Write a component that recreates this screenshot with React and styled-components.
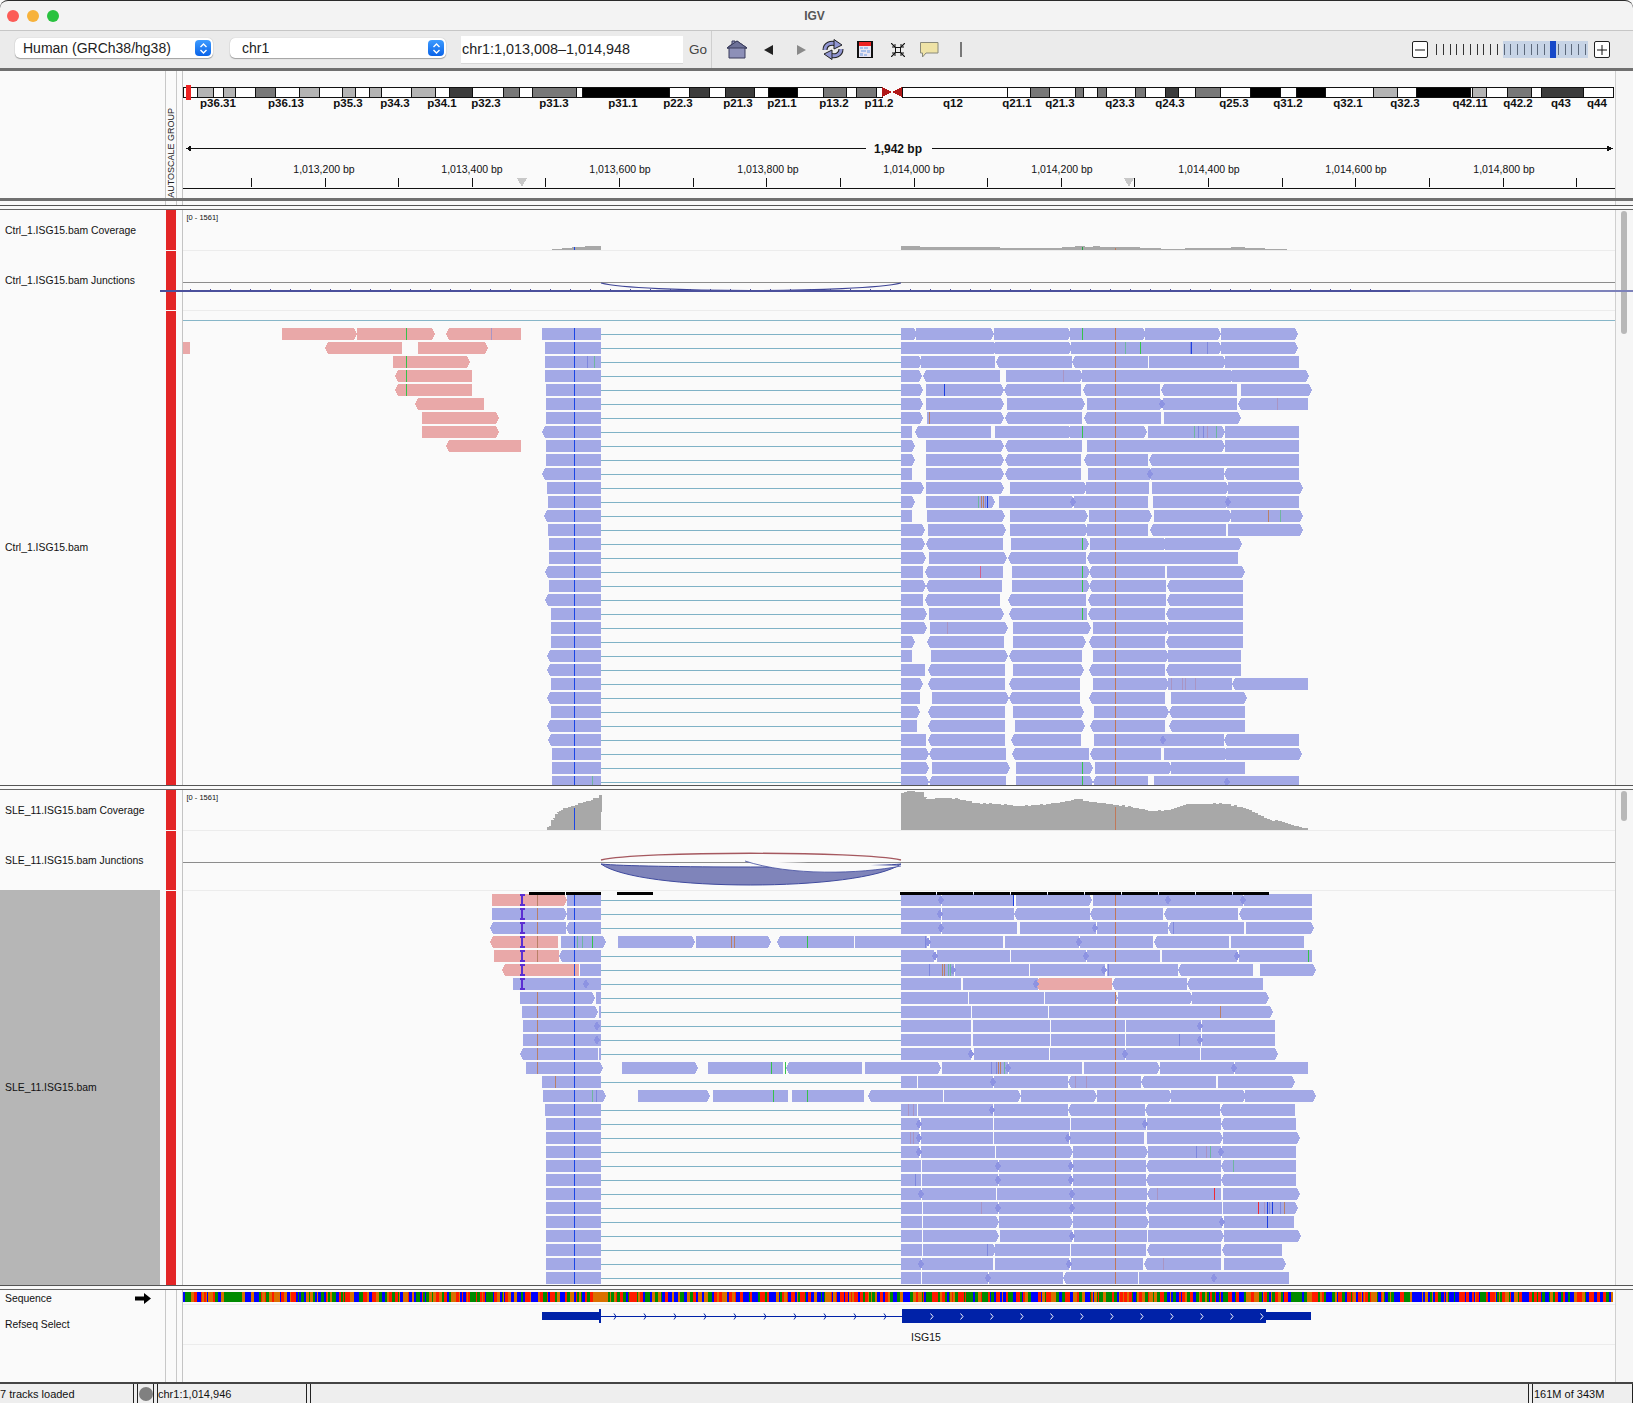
import React from "react";
import styled, { createGlobalStyle } from "styled-components";

const GlobalStyle = createGlobalStyle`
  html, body {
    margin: 0;
    padding: 0;
    background: #ffffff;
    overflow: hidden;
    font-family: "Liberation Sans", Arial, sans-serif;
  }
`;

// reads: "a-b>" = read from a to b, "<" / ">" = arrow end, trailing p = pink read,
// "*x" = overlap diamond, letter + x = mismatch tick
const MARKS = {
  g: "#35c24a",
  t: "#6fb5a0",
  b: "#1c3fe0",
  l: "#7f88dd",
  o: "#b98068",
  u: "#a995c4",
  r: "#ee2a35",
  m: "#d0608a",
};

const PANEL_ONE = [
  "542-601 282-357>p 357-435>p <446-521p g406 u491 901-917> 916-994> 994-1071> 1070-1146> 1145-1221> 1221-1298> g1082",
  "545-601 183-190p <325-402p 418-488>p 901-921 921-997> 995-1072> 1071-1146 1145-1222> 1221-1298> t1125 g1140 l1190 b1191 l1207",
  "545-601 393-470>p g406 l587 t594 901-922> 921-995 <996-1072 <1072-1148 1149-1226> 1225-1299",
  "545-601 <395-472p g406 901-922> <923-1000 1006-1083> 1082-1158 1157-1234> 1232-1309> u1063",
  "546-601 <395-472p g406 901-923> 926-1004> <1004-1081 <1083-1160 <1161-1237 1241-1312> b944",
  "546-601 <415-484p 901-923> 926-1004> 1007-1085> 1087-1163> 1163-1237 <1238-1308 *1162 u1277",
  "546-601 422-499>p 901-923> 927-1004> <1005-1082 <1084-1161 1164-1241> o929",
  "<542-601 422-499>p 901-912 <915-991 995-1072> 1070-1147> 1148-1225> 1225-1299 g1082 t1194 l1198 l1203 u1207 t1216",
  "546-601 <446-521p 901-915> 926-1004> <1005-1082 1087-1152> 1149-1225> 1225-1299",
  "546-601 901-915> 926-1004> <1005-1081 <1084-1148 <1149-1225 1225-1299",
  "<542-601 901-912 926-1004> <1005-1081 1088-1153> 1151-1224 <1224-1299 *1150",
  "547-601 901-924> 926-1004> 1010-1087> 1086-1149 1152-1229> 1228-1303>",
  "548-601 901-915> 926-995> 999-1075> 1074-1148 1153-1229> 1227-1299 *1073 *1228 t978 o981 o983 l985 b987",
  "<544-601 901-912 927-1005> 1010-1088> 1089-1152> 1154-1232> 1231-1303> o1268 t1280",
  "548-601 901-925> 928-1006> 1010-1088> 1087-1148 <1150-1226 1228-1303>",
  "549-601 901-925> <926-1003 1011-1089> 1090-1167> 1165-1242> g1082",
  "549-601 901-926> 929-1007> <1008-1086 <1087-1165 <1162-1238",
  "<545-601 901-923 <925-1003 1012-1090> <1089-1165 1167-1245> m980 g1082",
  "549-601 901-926> <926-1002 1012-1090> <1089-1166 <1167-1243 g1082",
  "<545-601 901-923 <925-1000 <1008-1086 <1088-1166 <1167-1243",
  "551-601 901-927> 929-1004> <1009-1087 <1088-1165 <1166-1243 g1082",
  "551-601 901-927> 930-1008> 1013-1091> 1093-1169> 1168-1243 u947",
  "551-601 901-915> <927-1004 1013-1086> <1089-1165 <1166-1243",
  "<547-601 901-912 931-1008> <1009-1082 1093-1169> 1168-1241",
  "<547-601 901-925 <928-1005 1013-1084> <1089-1165 <1166-1241",
  "551-601 901-923> <928-1005 <1009-1080 1093-1169> 1168-1232 <1232-1308 u1171 u1182 u1185 u1195",
  "<547-601 901-920 932-1009> <1009-1080 <1089-1165 1171-1247>",
  "551-601 901-920> <928-1005 1013-1084> 1094-1169> <1169-1245",
  "<547-601 901-917 <928-1005 1015-1085> <1090-1165 <1169-1245",
  "<548-601 901-926 <928-1005 <1011-1081 1094-1165 1163-1224 <1224-1299 *1163",
  "552-601 901-929> <929-1006 <1012-1089 <1090-1161 1164-1228> 1226-1302>",
  "552-601 901-929> 932-1010> 1016-1093> 1095-1172> 1171-1245 g1082",
  "552-601 901-929> <929-1006 1016-1093> <1093-1148 1154-1229 1227-1299 g1082 t592 *1227",
];

const PANEL_TWO = [
  "492-567>p 567-601 o537 901-941 *941 942-1013 1016-1092> 1093-1169 *1168 1169-1243 *1243 1244-1312 b1013",
  "492-567> 567-601 o537 901-941 *940 942-1014 <1014-1090 <1090-1163 <1164-1238 <1239-1312",
  "<490-566 <566-601 o537 901-941 *941 942-1017 1020-1096 *1095 1097-1168 <1168-1244 1246-1314> l1173",
  "<490-558p 561-606> o537 618-695> 696-771> <777-854 855-927 *928 930-1003 1005-1079 *1079 1080-1153 <1154-1229 1231-1304 t577 t582 g592 o731 o734 g807 l925",
  "494-559p <559-601 o537 901-934 *935 937-1010 1011-1086 *1086 1087-1160 1162-1237 *1237 1239-1312 g1308",
  "<502-579p 580-601 901-954 *953 955-1029 1030-1105 *1104 1107-1178 <1178-1253 1260-1316> l929 o942 o944 t948 t950 l1108",
  "513-601 *586 901-961 963-1038 <1036-1112p *1036 <1112-1187 <1187-1263",
  "520-595> 596-601 o537 901-968 969-1044 1045-1118> 1118-1193> 1192-1269>",
  "522-598> 599-601 o537 901-971 972-1048 1049-1122 1122-1197 1197-1273> o1220",
  "523-601 *597 o537 901-971 973-1050 1051-1125 1126-1201 *1200 1202-1275",
  "523-601 *597 o537 901-971 973-1050 1051-1125 1126-1201 *1200 1202-1275 l1179",
  "<520-598 599-601 o537 901-971 *971 974-1049 1050-1125 *1125 1126-1200 1201-1278>",
  "526-603> o537 622-698> 708-783 <786-862 865-941> 942-1008 *1008 1009-1082 1084-1160> 1160-1234 *1234 1235-1308 g771 g785 l991 l996 o998 o1000 t1004",
  "542-601 o555 901-917 918-993 *993 994-1068 <1068-1141 <1141-1216 1218-1295> u1075 u1086",
  "543-606> 638-710> 713-788 792-864 <868-943 944-1021> 1021-1097> 1097-1172> 1171-1246> 1245-1316> t592 l596 g773 g807",
  "545-601 901-917 918-993 *992 994-1068 <1068-1145 <1145-1220 <1220-1295 u908 u913",
  "546-601 901-919 *919 921-993 994-1070 1071-1146 *1145 1147-1221 <1221-1296",
  "546-601 901-919 *919 921-993 994-1069 *1068 1070-1144 1147-1223> 1223-1300> u910 u913",
  "546-601 901-919 *919 921-995 996-1073> 1073-1148> 1148-1221 *1221 1222-1296 l1196 u1206 t1210",
  "546-601 901-921 922-998 *998 999-1071 *1071 1073-1146 <1146-1221 <1221-1296 t1233",
  "546-601 901-921 922-998 *998 999-1071 *1071 1073-1146 <1146-1221 <1221-1296 l915",
  "546-601 901-921 *921 922-996 997-1072 *1072 1073-1147 <1147-1221 1223-1300> u1157 r1214",
  "546-601 901-922 923-998 *998 999-1072 *1072 1073-1146 <1146-1222 1223-1298> u981 r1258 u1264 b1267 l1269 b1272 l1280 o1284",
  "546-601 901-922 923-999> 999-1073> 1073-1149> 1149-1222 *1222 1224-1294 b1267",
  "546-601 901-922 923-999> 1000-1072 *1072 1074-1147 1148-1224> 1224-1301>",
  "546-601 901-922 923-996> 995-1070 1071-1146 <1147-1221 <1222-1282 l987",
  "546-601 901-921 *921 922-993 995-1069 *1069 1071-1143 <1144-1221 1224-1286> u1163",
  "546-601 901-921 922-988 *988 989-1063 <1063-1138 1139-1215 *1214 1215-1289",
];

const BANDS = [
  [183, 197, "#fff"], [197, 213, "#b4b4b4"], [213, 223, "#fff"], [223, 235, "#b4b4b4"], [235, 255, "#fff"],
  [255, 275, "#787878"], [275, 299, "#fff"], [299, 319, "#b4b4b4"], [319, 342, "#fff"], [342, 355, "#b4b4b4"],
  [355, 369, "#fff"], [369, 381, "#b4b4b4"], [381, 411, "#fff"], [411, 435, "#b4b4b4"], [435, 449, "#fff"],
  [449, 472, "#3c3c3c"], [472, 503, "#fff"], [503, 519, "#787878"], [519, 532, "#fff"], [532, 576, "#787878"],
  [576, 582, "#fff"], [582, 669, "#000"], [669, 689, "#fff"], [689, 709, "#3c3c3c"], [709, 725, "#fff"],
  [725, 754, "#3c3c3c"], [754, 768, "#fff"], [768, 797, "#000"], [797, 823, "#fff"], [823, 846, "#787878"],
  [846, 856, "#fff"], [856, 876, "#787878"], [876, 882, "#fff"], [902, 1007, "#fff"], [1007, 1030, "#fff"],
  [1030, 1049, "#787878"], [1049, 1075, "#fff"], [1075, 1083, "#787878"], [1083, 1097, "#fff"], [1097, 1106, "#787878"],
  [1106, 1135, "#fff"], [1135, 1145, "#787878"], [1145, 1165, "#fff"], [1165, 1178, "#3c3c3c"], [1178, 1195, "#fff"],
  [1195, 1220, "#787878"], [1220, 1250, "#fff"], [1250, 1280, "#000"], [1280, 1296, "#fff"], [1296, 1325, "#000"],
  [1325, 1373, "#fff"], [1373, 1397, "#b4b4b4"], [1397, 1416, "#fff"], [1416, 1470, "#000"], [1470, 1472, "#fff"],
  [1472, 1486, "#b4b4b4"], [1486, 1507, "#fff"], [1507, 1531, "#787878"], [1531, 1541, "#fff"], [1541, 1583, "#3c3c3c"],
  [1583, 1613, "#fff"],
];

const BAND_LABELS = [
  ["p36.31", 218], ["p36.13", 286], ["p35.3", 348], ["p34.3", 395], ["p34.1", 442], ["p32.3", 486], ["p31.3", 554],
  ["p31.1", 623], ["p22.3", 678], ["p21.3", 738], ["p21.1", 782], ["p13.2", 834], ["p11.2", 879], ["q12", 953],
  ["q21.1", 1017], ["q21.3", 1060], ["q23.3", 1120], ["q24.3", 1170], ["q25.3", 1234], ["q31.2", 1288], ["q32.1", 1348],
  ["q32.3", 1405], ["q42.11", 1470], ["q42.2", 1518], ["q43", 1561], ["q44", 1597],
];

const RULER_LABELS = [
  ["1,013,200 bp", 324], ["1,013,400 bp", 472], ["1,013,600 bp", 620], ["1,013,800 bp", 768], ["1,014,000 bp", 914],
  ["1,014,200 bp", 1062], ["1,014,400 bp", 1209], ["1,014,600 bp", 1356], ["1,014,800 bp", 1504],
];

const COVERAGE_TWO = [
  [[544, 830], [548, 826], [552, 818], [556, 812], [560, 810], [565, 808], [572, 806], [580, 803], [590, 800], [601, 795]],
  [[901, 793], [909, 791], [921, 792], [926, 799], [940, 798], [957, 799], [974, 803], [995, 804], [1019, 806], [1048, 804],
    [1062, 802], [1077, 799], [1091, 802], [1110, 804], [1130, 807], [1149, 811], [1168, 810], [1187, 804], [1207, 804],
    [1219, 803], [1240, 807], [1255, 813], [1269, 820], [1279, 821], [1293, 826], [1308, 829]],
];

const COVERAGE_ONE = [
  "552,250 552,249 562,249 562,248 572,248 572,247 585,247 585,246 601,246 601,250",
  "901,250 901,246 920,246 920,247 1000,247 1000,248 1062,248 1062,247 1075,247 1075,246 1085,246 1085,247 1093,247 1093,246 1100,246 1100,247 1140,247 1140,248 1161,248 1161,249 1185,249 1185,248 1231,248 1231,247 1245,247 1245,248 1265,248 1265,249 1287,249 1287,250",
];

const stepCoverage = (pts) => {
  const out = [`${pts[0][0]},830`];
  for (let i = 0; i < pts.length - 1; i++) {
    const [x0, y0] = pts[i];
    const [x1, y1] = pts[i + 1];
    for (let x = x0; x < x1; x += 3) {
      const wobble = Math.sin(x * 0.9) * 0.45;
      const y = Math.round(y0 + ((y1 - y0) * (x - x0)) / (x1 - x0) + wobble);
      out.push(`${x},${y}`, `${x + 3},${y}`);
    }
  }
  out.push(`${pts[pts.length - 1][0]},830`);
  return out.join(" ");
};

const SEQ_COLORS = ["#008a00", "#0000ff", "#d97000", "#ff1a00"];
const makeSequence = () => {
  let seed = 11;
  const bars = [];
  let x = 183;
  while (x < 1613) {
    seed = (seed * 1103515245 + 12345) & 0x7fffffff;
    const w = Math.min(1 + ((seed >> 8) % 3), 1613 - x);
    const c = x > 222 && x < 240 ? 0 : (seed >> 16) % 4;
    bars.push([x, w, SEQ_COLORS[c]]);
    x += w;
  }
  return bars;
};
const SEQUENCE = makeSequence();

const Window = styled.div`
  width: 1633px;
  height: 1403px;
  display: flex;
  flex-direction: column;
  background: #fafafa;
  overflow: hidden;
`;

const TitleBar = styled.div`
  height: 31px;
  box-sizing: border-box;
  flex: none;
  display: flex;
  align-items: center;
  position: relative;
  padding-left: 7px;
  gap: 8px;
  background: #f3f3f3;
  border-top: 1px solid #2a2a2a;
  border-bottom: 1px solid #c6c6c6;
  border-radius: 8px 8px 0 0;
`;

const Light = styled.span`
  width: 12px;
  height: 12px;
  border-radius: 50%;
  background: ${(p) => p.$color};
`;

const WindowTitle = styled.div`
  position: absolute;
  left: 0;
  right: 4px;
  text-align: center;
  font-size: 12px;
  font-weight: bold;
  color: #555;
`;

const Toolbar = styled.div`
  height: 40px;
  box-sizing: border-box;
  flex: none;
  display: flex;
  align-items: center;
  padding-left: 15px;
  background: #ebebeb;
  border-bottom: 3px solid #707070;
`;

const SelectBox = styled.div`
  width: ${(p) => p.$w}px;
  height: 20px;
  box-sizing: border-box;
  margin-left: ${(p) => p.$ml || 0}px;
  margin-top: -3px;
  padding: 0 2px 0 ${(p) => p.$pad}px;
  display: flex;
  align-items: center;
  justify-content: space-between;
  background: #fff;
  border-radius: 5px;
  box-shadow: 0 1px 1px rgba(0, 0, 0, 0.3), 0 0 1px rgba(0, 0, 0, 0.25);
  font-size: 14px;
  color: #222;
`;

const Stepper = styled.span`
  width: 16px;
  height: 16px;
  display: flex;
  align-items: center;
  justify-content: center;
  border-radius: 4px;
  background: linear-gradient(#3d9bff, #0a63e8);
`;

const LocusInput = styled.div`
  width: 222px;
  height: 28px;
  margin-left: 15px;
  box-sizing: border-box;
  padding-left: 1px;
  display: flex;
  align-items: center;
  background: #fff;
  border-bottom: 1px solid #d8d8d8;
  font-size: 14.4px;
  color: #222;
`;

const GoLabel = styled.span`
  width: 17px;
  margin-left: 6px;
  margin-right: 1px;
  font-size: 13.5px;
  color: #444;
`;

const ToolSeparator = styled.span`
  width: 1px;
  align-self: stretch;
  margin-left: 4px;
  background: #cfcfcf;
`;

const ToolIcon = styled.svg`
  flex: none;
  display: block;
  margin-left: ${(p) => p.$ml}px;
`;

const ZoomControl = styled.div`
  margin-left: auto;
  margin-right: 23px;
  display: flex;
  align-items: center;
`;

const ZoomButton = styled.span`
  width: 16px;
  height: 17px;
  box-sizing: border-box;
  display: flex;
  align-items: center;
  justify-content: center;
  background: #fff;
  border: 1px solid #222;
  border-radius: 2px;
`;

const ZoomTrack = styled.div`
  position: relative;
  width: 150px;
  height: 17px;
  margin: 0 8px;
  display: flex;
  align-items: center;
  justify-content: space-between;
`;

const ZoomTick = styled.span`
  width: 1px;
  height: 11px;
  background: #333;
`;

const ZoomRange = styled.span`
  position: absolute;
  left: 67px;
  top: 0;
  width: 85px;
  height: 17px;
  background: rgba(150, 180, 225, 0.42);
`;

const ZoomThumb = styled.span`
  position: absolute;
  left: 114px;
  top: 0;
  width: 6px;
  height: 17px;
  background: #1648c8;
`;

const HeaderPanel = styled.div`
  height: 130px;
  box-sizing: border-box;
  flex: none;
  display: grid;
  grid-template-columns: 165px 12px 5px 1fr 18px;
  background: #fafafa;
  border-bottom: 3px solid #707070;
`;

const AttrHeader = styled.div`
  display: flex;
  align-items: flex-end;
  justify-content: center;
  box-sizing: border-box;
  border-left: 1px solid #c8c8c8;
  border-right: 1px solid #c8c8c8;
`;

const AutoscaleLabel = styled.span`
  writing-mode: vertical-rl;
  transform: rotate(180deg);
  font-size: 9px;
  line-height: 10px;
  white-space: nowrap;
  color: #222;
`;

const Strip = styled.div`
  height: 4px;
  flex: none;
  display: grid;
  grid-template-columns: 165px 12px 5px 1fr 18px;
  background: #fafafa;
`;

const Divider = styled.div`
  height: 5px;
  flex: none;
  box-sizing: border-box;
  background: #fafafa;
  border-top: 1px solid #555;
  border-bottom: 1px solid #666;
`;

const TrackPanel = styled.div`
  height: ${(p) => p.$h}px;
  flex: none;
  position: relative;
  display: grid;
  grid-template-columns: 160px 6px 10px 6px 1fr 18px;
  overflow: hidden;
`;

const NameColumn = styled.div`
  display: flex;
  flex-direction: column;
`;

const NameCell = styled.div`
  height: ${(p) => (p.$h ? `${p.$h}px` : "auto")};
  flex: ${(p) => (p.$h ? "none" : 1)};
  display: flex;
  align-items: center;
  padding-left: 5px;
  font-size: 10.4px;
  color: #111;
  background: ${(p) => (p.$selected ? "#b6b6b6" : "transparent")};
`;

const SequenceArrow = styled.svg`
  margin-left: 83px;
`;

const AttrColumn = styled.div`
  grid-column: 3;
  display: flex;
  flex-direction: column;
  gap: 1px;
`;

const AttrBox = styled.div`
  height: ${(p) => (p.$h ? `${p.$h - 1}px` : "auto")};
  flex: ${(p) => (p.$h ? "none" : 1)};
  background: #e32526;
`;

const DataColumn = styled.div`
  grid-column: ${(p) => p.$col};
  border-left: 1px solid #c4c4c4;
  min-width: 0;
`;

const ScrollColumn = styled.div`
  grid-column: ${(p) => p.$col};
  box-sizing: border-box;
  padding: 1px 6px 0 5px;
  background: #f6f6f6;
  border-left: 1px solid #cfcfcf;
`;

const ScrollThumb = styled.div`
  height: ${(p) => p.$h}px;
  border-radius: 4px;
  background: #b8b8b8;
`;

const Canvas = styled.svg`
  display: block;
  width: 100%;
  height: 100%;
  shape-rendering: crispEdges;
`;

const SmoothGroup = styled.g`
  shape-rendering: auto;
`;

const JunctionLine = styled.div`
  position: absolute;
  left: 160px;
  right: 0;
  top: 80px;
  height: 2px;
  background: linear-gradient(to right, #4b509c 1250px, #7d82ba 1250px);
`;

const SmallText = styled.text`
  font-size: ${(p) => p.$size || 10.5}px;
  font-weight: ${(p) => (p.$bold ? "bold" : "normal")};
  fill: #111;
  text-anchor: ${(p) => p.$anchor || "middle"};
  shape-rendering: auto;
`;

const ReadBody = styled.polygon`
  fill: ${(p) => (p.$pink ? "#e9a8a8" : "#a3a9e6")};
`;

const BottomPanel = styled(TrackPanel)`
  grid-template-columns: 165px 12px 5px 1fr 18px;
`;

const StatusBar = styled.div`
  height: 21px;
  flex: none;
  box-sizing: border-box;
  display: flex;
  gap: 3px;
  background: #eeeeee;
  border-top: 2px solid #444;
  font-size: 11px;
  color: #111;
`;

const StatusCell = styled.div`
  width: ${(p) => (p.$w ? `${p.$w}px` : "auto")};
  flex: ${(p) => (p.$w ? "none" : 1)};
  box-sizing: border-box;
  display: flex;
  align-items: center;
  padding-left: ${(p) => p.$pad || 0}px;
  border-left: ${(p) => (p.$noLeft ? "none" : "1px solid #222")};
  border-right: 1px solid #222;
`;

const StatusDot = styled.span`
  width: 14px;
  height: 14px;
  border-radius: 50%;
  background: #808080;
`;

const Chevrons = () => (
  <svg width="9" height="13" viewBox="0 0 9 13">
    <path d="M1.5 5 L4.5 2 L7.5 5 M1.5 8 L4.5 11 L7.5 8" fill="none" stroke="#fff" strokeWidth="1.4" />
  </svg>
);

const readRow = (text, y) => {
  const bodies = [];
  const diamonds = [];
  const ticks = [];
  text.split(" ").forEach((tok, i) => {
    const seg = tok.match(/^(<?)(\d+)-(\d+)(>?)(p?)$/);
    if (seg) {
      const a = +seg[2];
      const b = +seg[3];
      const left = seg[1] ? `${a + 3},${y + 12} ${a},${y + 6} ${a + 3},${y}` : `${a},${y + 12} ${a},${y}`;
      const right = seg[4] ? `${b - 3},${y} ${b},${y + 6} ${b - 3},${y + 12}` : `${b},${y} ${b},${y + 12}`;
      bodies.push(<ReadBody key={i} points={`${left} ${right}`} $pink={!!seg[5]} />);
    } else if (tok[0] === "*") {
      const x = +tok.slice(1);
      diamonds.push(
        <polygon key={i} points={`${x - 3},${y + 6} ${x},${y + 1} ${x + 3},${y + 6} ${x},${y + 11}`} fill="#8d93e2" />
      );
    } else {
      ticks.push(<rect key={i} x={+tok.slice(1)} y={y} width="1" height="12" fill={MARKS[tok[0]]} />);
    }
  });
  return [bodies, diamonds, ticks];
};

const ReadRows = ({ rows, top, noConnector, noOrange }) =>
  rows.map((text, n) => {
    const y = top + n * 14;
    return (
      <g key={n}>
        {!noConnector.includes(n) && <rect x="601" y={y + 6} width="300" height="1" fill="#7fb2c6" />}
        {readRow(text, y)}
        <rect x="574" y={y} width="1" height="12" fill="#1c46e6" />
        {!noOrange.includes(n) && <rect x="1115" y={y} width="1" height="12" fill="#c0785a" />}
      </g>
    );
  });

const HouseIcon = () => (
  <ToolIcon $ml={14} width="22" height="19" viewBox="0 0 22 19">
    <path d="M1 8 L6 4 L6 1 L9 1 L9 2.5 L11 1 L21 8 L19 8 L19 18 L3 18 L3 8 Z" fill="#8d90b8" stroke="#3a3d5c" />
    <path d="M1 8 L11 1 L21 8 Z" fill="#6d7198" stroke="#3a3d5c" />
  </ToolIcon>
);

const ArrowIcon = ({ back, $ml }) => (
  <ToolIcon $ml={$ml} width="9" height="10" viewBox="0 0 9 10">
    <path d={back ? "M0 5 L9 0 L9 10 Z" : "M0 0 L9 5 L0 10 Z"} fill={back ? "#222" : "#8a8a8a"} />
  </ToolIcon>
);

const RefreshIcon = () => (
  <ToolIcon $ml={16} width="22" height="21" viewBox="0 0 22 21">
    <SmoothGroup>
      <path d="M3 11 C3 5 9 3 14 5" fill="none" stroke="#222" strokeWidth="5" />
      <path d="M3 11 C3 5 9 3 14 5" fill="none" stroke="#9196d2" strokeWidth="3" />
      <path d="M12 0.5 L20 6 L12 10 Z" fill="#9196d2" stroke="#222" />
      <path d="M19 10 C19 16 13 18 8 16" fill="none" stroke="#222" strokeWidth="5" />
      <path d="M19 10 C19 16 13 18 8 16" fill="none" stroke="#9196d2" strokeWidth="3" />
      <path d="M10 11 L2 15 L10 20.5 Z" fill="#9196d2" stroke="#222" />
    </SmoothGroup>
  </ToolIcon>
);

const RegionIcon = () => (
  <ToolIcon $ml={13} width="16" height="17" viewBox="0 0 16 17">
    <rect x="0.5" y="0.5" width="15" height="16" fill="#e9e6f2" stroke="#111" />
    <rect x="1" y="1" width="1" height="15" fill="#111" />
    <rect x="14" y="1" width="1" height="15" fill="#111" />
    <rect x="2" y="1" width="12" height="4" fill="#ee2222" />
    <path d="M3 6 h3 v2 h-3 Z M7 6 h4 v2 h-4 Z M4 9 h5 v2 h-5 Z M10 9 h3 v3 h-3 Z M3 12 h3 v3 h-3 Z M7 13 h3 v2 h-3 Z" fill="#a9c0ea" />
  </ToolIcon>
);

const CollapseIcon = () => (
  <ToolIcon $ml={18} width="14" height="14" viewBox="0 0 14 14">
    <rect x="4.5" y="4.5" width="5" height="5" fill="none" stroke="#111" />
    <path d="M0 0 L4 4 M14 0 L10 4 M0 14 L4 10 M14 14 L10 10" stroke="#111" strokeWidth="1.2" />
    <path d="M1 4 L4 4 L4 1 M13 4 L10 4 L10 1 M1 10 L4 10 L4 13 M13 10 L10 10 L10 13" fill="none" stroke="#111" />
  </ToolIcon>
);

const CommentIcon = () => (
  <ToolIcon $ml={15} width="19" height="16" viewBox="0 0 19 16">
    <path d="M0.5 0.5 H18 V11 H6 L2.5 15 V11 H0.5 Z" fill="#efe3a6" stroke="#8a8a7a" />
  </ToolIcon>
);

const IdeogramAndRuler = () => (
  <Canvas viewBox="183 71 1432 127">
    {BANDS.map(([a, b, c]) => (
      <rect key={a} x={a} y="87" width={b - a} height="10" fill={c} stroke="#111" strokeWidth="1" />
    ))}
    <polygon points="882,87 892,92 882,97" fill="#b01818" />
    <polygon points="902,87 892,92 902,97" fill="#b01818" />
    <rect x="186" y="85" width="5" height="15" fill="#ee2222" />
    {BAND_LABELS.map(([t, x]) => (
      <SmallText key={t} x={x} y="107" $size={11.5} $bold>
        {t}
      </SmallText>
    ))}
    <rect x="186" y="148" width="680" height="1" fill="#111" />
    <rect x="932" y="148" width="681" height="1" fill="#111" />
    <polygon points="186,148.5 191,145.5 191,151.5" fill="#111" />
    <polygon points="1613,148.5 1607,145.5 1607,151.5" fill="#111" />
    <SmallText x="898" y="153" $size={12} $bold>
      1,942 bp
    </SmallText>
    {RULER_LABELS.map(([t, x]) => (
      <SmallText key={t} x={x} y="173">
        {t}
      </SmallText>
    ))}
    {Array.from({ length: 19 }, (_, k) => (
      <rect key={k} x={Math.round(251 + 73.62 * k)} y="178" width="1" height="9" fill="#111" />
    ))}
    <rect x="183" y="188" width="1432" height="1" fill="#111" />
    <polygon points="517,178 527,178 522,187" fill="#c8c8c8" />
    <polygon points="1124,178 1134,178 1129,187" fill="#c8c8c8" />
  </Canvas>
);

const ControlTracks = () => (
  <Canvas viewBox="183 210 1432 575">
    <SmallText x="186.5" y="220" $size={7.5} $anchor="start">
      [0 - 1561]
    </SmallText>
    {COVERAGE_ONE.map((pts) => (
      <polygon key={pts} points={pts} fill="#a8a8a8" />
    ))}
    <rect x="574" y="247" width="1" height="3" fill="#1c46e6" />
    <rect x="1082" y="247" width="1" height="3" fill="#22a040" />
    <rect x="1115" y="248" width="1" height="2" fill="#c0785a" />
    <rect x="183" y="250" width="1432" height="1" fill="#ececec" />
    <rect x="183" y="282" width="1432" height="1" fill="#8c8c8c" />
    {Array.from({ length: 60 }, (_, k) => (
      <rect key={k} x={190 + k * 20} y="289" width="1" height="1" fill="#474c9e" />
    ))}
    <SmoothGroup>
      <path d="M601 283 C640 293, 860 293, 901 283" fill="none" stroke="#3f4596" strokeWidth="1.2" />
    </SmoothGroup>
    <rect x="183" y="310" width="1432" height="1" fill="#ececec" />
    <rect x="183" y="320" width="1432" height="1" fill="#87b6c8" />
    <ReadRows rows={PANEL_ONE} top={328} noConnector={[]} noOrange={[]} />
  </Canvas>
);

const CaseTracks = () => (
  <Canvas viewBox="183 790 1432 495">
    <SmallText x="186.5" y="800" $size={7.5} $anchor="start">
      [0 - 1561]
    </SmallText>
    {COVERAGE_TWO.map((pts) => (
      <polygon key={pts[0][0]} points={stepCoverage(pts)} fill="#a8a8a8" />
    ))}
    <rect x="574" y="808" width="1" height="22" fill="#1c46e6" />
    <rect x="1115" y="807" width="1" height="23" fill="#c0785a" />
    <rect x="183" y="830" width="1432" height="1" fill="#ececec" />
    <rect x="183" y="862" width="1432" height="1" fill="#8c8c8c" />
    <SmoothGroup>
      <path d="M601 860 C640 851, 860 851, 901 860" fill="none" stroke="#a5585f" strokeWidth="1.3" />
      <path d="M601 864 C640 892, 860 892, 901 864 C860 868, 640 868, 601 864 Z" fill="#7f84ba" stroke="#3f4a9e" strokeWidth="1" />
      <path d="M745 861 C790 876, 860 874, 901 866" fill="#fafafa" stroke="#3f4a9e" strokeWidth="0.8" />
    </SmoothGroup>
    <rect x="183" y="890" width="1432" height="1" fill="#ececec" />
    <ReadRows rows={PANEL_TWO} top={894} noConnector={[3, 12, 14]} noOrange={[5, 6]} />
    {[[529, 565], [566, 601], [617, 653]].map(([a, b]) => (
      <rect key={a} x={a} y="892" width={b - a} height="3" fill="#000" />
    ))}
    {Array.from({ length: 10 }, (_, k) => (
      <rect key={k} x={900 + k * 37} y="892" width="36" height="3" fill="#000" />
    ))}
    {[0, 1, 2, 3, 4, 5, 6].map((k) => (
      <g key={k} fill="#5b2fd2">
        <rect x="521" y={894 + k * 14} width="2" height="12" />
        <rect x="520" y={894 + k * 14} width="5" height="2" />
        <rect x="520" y={904 + k * 14} width="5" height="2" />
      </g>
    ))}
  </Canvas>
);

const GeneTracks = () => (
  <Canvas viewBox="183 1290 1432 92">
    {SEQUENCE.map(([x, w, c]) => (
      <rect key={x} x={x} y="1292" width={w} height="10" fill={c} />
    ))}
    <rect x="183" y="1304" width="1432" height="1" fill="#ececec" />
    <rect x="542" y="1312" width="58" height="8" fill="#0022a8" />
    <rect x="599" y="1309" width="2" height="14" fill="#0022a8" />
    <rect x="600" y="1316" width="302" height="1" fill="#0022a8" />
    <SmoothGroup>
      {Array.from({ length: 10 }, (_, k) => (
        <path key={k} d={`M${614 + k * 30} 1313.5 l2 3 l-2 3`} fill="none" stroke="#0022a8" />
      ))}
    </SmoothGroup>
    <rect x="902" y="1309" width="364" height="14" fill="#0022a8" />
    <rect x="1266" y="1312" width="45" height="8" fill="#0022a8" />
    <SmoothGroup>
      {Array.from({ length: 12 }, (_, k) => (
        <path key={k} d={`M${930.5 + k * 30} 1313.5 l2.5 3 l-2.5 3`} fill="none" stroke="#fff" />
      ))}
    </SmoothGroup>
    <SmallText x="926" y="1341">
      ISG15
    </SmallText>
    <rect x="183" y="1344" width="1432" height="1" fill="#ececec" />
  </Canvas>
);

export default function App() {
  return (
    <Window>
      <GlobalStyle />
      <TitleBar>
        <Light $color="#fc5c57" />
        <Light $color="#f7b23b" />
        <Light $color="#29c23f" />
        <WindowTitle>IGV</WindowTitle>
      </TitleBar>

      <Toolbar>
        <SelectBox $w={198} $pad={8}>
          Human (GRCh38/hg38)
          <Stepper>
            <Chevrons />
          </Stepper>
        </SelectBox>
        <SelectBox $w={216} $ml={17} $pad={12}>
          chr1
          <Stepper>
            <Chevrons />
          </Stepper>
        </SelectBox>
        <LocusInput>chr1:1,013,008–1,014,948</LocusInput>
        <GoLabel>Go</GoLabel>
        <ToolSeparator />
        <HouseIcon />
        <ArrowIcon back $ml={16} />
        <ArrowIcon $ml={24} />
        <RefreshIcon />
        <RegionIcon />
        <CollapseIcon />
        <CommentIcon />
        <ToolIcon $ml={21} width="2" height="15" viewBox="0 0 2 15">
          <rect width="2" height="15" fill="#777" />
        </ToolIcon>
        <ZoomControl>
          <ZoomButton>
            <svg width="10" height="10" viewBox="0 0 10 10">
              <rect y="4.5" width="10" height="1" fill="#111" />
            </svg>
          </ZoomButton>
          <ZoomTrack>
            {Array.from({ length: 23 }, (_, i) => (
              <ZoomTick key={i} />
            ))}
            <ZoomRange />
            <ZoomThumb />
          </ZoomTrack>
          <ZoomButton>
            <svg width="10" height="10" viewBox="0 0 10 10">
              <path d="M0 5 H10 M5 0 V10" stroke="#111" strokeWidth="1" />
            </svg>
          </ZoomButton>
        </ZoomControl>
      </Toolbar>

      <HeaderPanel>
        <div />
        <AttrHeader>
          <AutoscaleLabel>AUTOSCALE GROUP</AutoscaleLabel>
        </AttrHeader>
        <div />
        <DataColumn $col={4}>
          <IdeogramAndRuler />
        </DataColumn>
        <ScrollColumn $col={5} />
      </HeaderPanel>

      <Strip>
        <div />
        <AttrHeader />
        <div />
        <DataColumn $col={4} />
        <ScrollColumn $col={5} />
      </Strip>
      <Divider />

      <TrackPanel $h={575}>
        <NameColumn>
          <NameCell $h={40}>Ctrl_1.ISG15.bam Coverage</NameCell>
          <NameCell $h={60}>Ctrl_1.ISG15.bam Junctions</NameCell>
          <NameCell>Ctrl_1.ISG15.bam</NameCell>
        </NameColumn>
        <AttrColumn>
          <AttrBox $h={41} />
          <AttrBox $h={60} />
          <AttrBox />
        </AttrColumn>
        <DataColumn $col={5}>
          <ControlTracks />
        </DataColumn>
        <ScrollColumn $col={6}>
          <ScrollThumb $h={123} />
        </ScrollColumn>
        <JunctionLine />
      </TrackPanel>
      <Divider />

      <TrackPanel $h={495}>
        <NameColumn>
          <NameCell $h={40}>SLE_11.ISG15.bam Coverage</NameCell>
          <NameCell $h={60}>SLE_11.ISG15.bam Junctions</NameCell>
          <NameCell $selected>SLE_11.ISG15.bam</NameCell>
        </NameColumn>
        <AttrColumn>
          <AttrBox $h={41} />
          <AttrBox $h={60} />
          <AttrBox />
        </AttrColumn>
        <DataColumn $col={5}>
          <CaseTracks />
        </DataColumn>
        <ScrollColumn $col={6}>
          <ScrollThumb $h={30} />
        </ScrollColumn>
      </TrackPanel>
      <Divider />

      <BottomPanel $h={92}>
        <NameColumn>
          <NameCell $h={16}>
            Sequence
            <SequenceArrow width="16" height="11" viewBox="0 0 16 11">
              <path d="M0 3.5 H9 V0 L16 5.5 L9 11 V7.5 H0 Z" fill="#000" />
            </SequenceArrow>
          </NameCell>
          <NameCell $h={36}>Refseq Select</NameCell>
        </NameColumn>
        <AttrHeader />
        <div />
        <DataColumn $col={4}>
          <GeneTracks />
        </DataColumn>
        <ScrollColumn $col={5} />
      </BottomPanel>

      <StatusBar>
        <StatusCell $w={134} $noLeft>
          7 tracks loaded
        </StatusCell>
        <StatusCell $w={17} $pad={1}>
          <StatusDot />
        </StatusCell>
        <StatusCell $w={150}>chr1:1,014,946</StatusCell>
        <StatusCell />
        <StatusCell $w={101} $pad={1}>
          161M of 343M
        </StatusCell>
      </StatusBar>
    </Window>
  );
}
